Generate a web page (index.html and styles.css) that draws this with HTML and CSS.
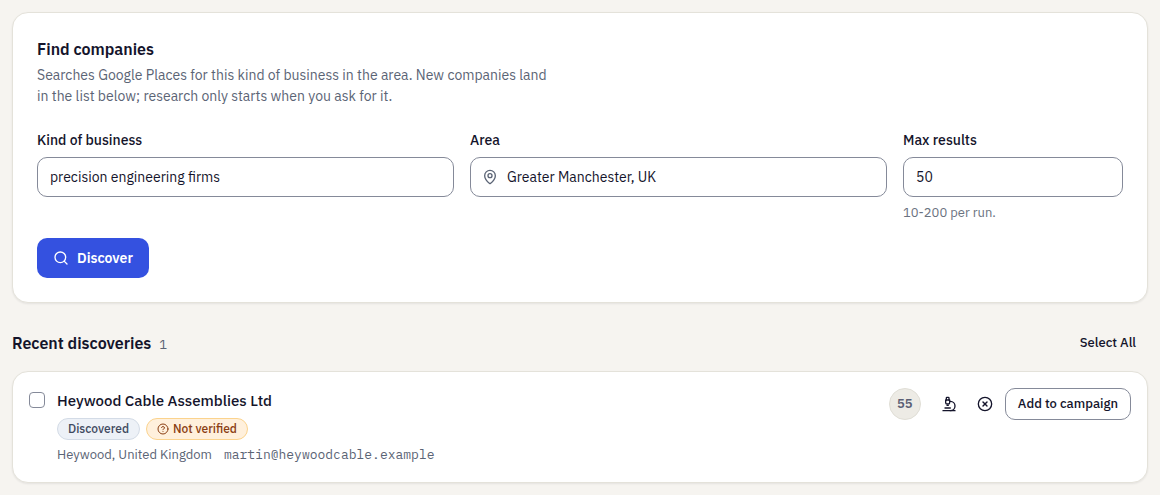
FILE: index.html
```html
<!DOCTYPE html>
<html lang="en">
<head>
    <meta charset="UTF-8">
    <meta name="viewport" content="width=device-width, initial-scale=1.0">
    <title>Find companies</title>
    <link rel="stylesheet" href="styles.css">
</head>
<body>

    <!-- Search form -->
    <form class="card search-card">
        <div class="card-head">
            <h2>Find companies</h2>
            <p>Searches Google Places for this kind of business in the area. New companies land in the list below; research only starts when you ask for it.</p>
        </div>
        <div class="fields">
            <div class="field">
                <label for="kind">Kind of business</label>
                <input class="input" type="text" id="kind" value="precision engineering firms">
            </div>
            <div class="field">
                <label for="area">Area</label>
                <div class="input input-icon">
                    <svg class="icon" viewBox="0 0 24 24"><path d="M20 10c0 4.993-5.539 10.193-7.399 11.799a1 1 0 0 1-1.202 0C9.539 20.193 4 14.993 4 10a8 8 0 0 1 16 0"/><circle cx="12" cy="10" r="3"/></svg>
                    <input type="text" id="area" value="Greater Manchester, UK">
                </div>
            </div>
            <div class="field">
                <label for="max">Max results</label>
                <input class="input" type="text" inputmode="numeric" id="max" value="50" aria-describedby="max-hint">
                <span class="hint" id="max-hint">10-200 per run.</span>
            </div>
        </div>
        <button class="btn btn-primary" type="button">
            <svg class="icon" viewBox="0 0 24 24"><circle cx="11" cy="11" r="8"/><path d="m21 21-4.300-4.300"/></svg>
            Discover
        </button>
    </form>

    <!-- Results -->
    <section class="results">
        <div class="results-head">
            <div class="results-title">
                <h2>Recent discoveries</h2>
                <span class="count">1</span>
            </div>
            <button class="btn btn-small" type="button">Select All</button>
        </div>
        <article class="card company">
            <input class="check" type="checkbox" id="company-1">
            <div class="company-info">
                <h3><label for="company-1">Heywood Cable Assemblies Ltd</label></h3>
                <div class="badges">
                    <span class="badge">Discovered</span>
                    <span class="badge badge-warn">
                        <svg class="icon" viewBox="0 0 24 24"><circle cx="12" cy="12" r="10"/><path d="M9.090 9a3 3 0 0 1 5.830 1c0 2-3 3-3 3"/><path d="M12 17h.01"/></svg>
                        Not verified
                    </span>
                </div>
                <div class="meta">
                    <span>Heywood, United Kingdom</span>
                    <span class="email">martin@heywoodcable.example</span>
                </div>
            </div>
            <span class="score">55</span>
            <div class="actions">
                <button class="icon-btn" type="button" aria-label="Research">
                    <svg class="icon" viewBox="0 0 24 24"><path d="M6 18h8"/><path d="M3 22h18"/><path d="M14 22a7 7 0 1 0 0-14h-1"/><path d="M9 14h2"/><path d="M9 12a2 2 0 0 1-2-2V6h6v4a2 2 0 0 1-2 2Z"/><path d="M12 6V3a1 1 0 0 0-1-1H9a1 1 0 0 0-1 1v3"/></svg>
                </button>
                <button class="icon-btn" type="button" aria-label="Dismiss">
                    <svg class="icon" viewBox="0 0 24 24"><circle cx="12" cy="12" r="10"/><path d="m15 9-6 6"/><path d="m9 9 6 6"/></svg>
                </button>
                <button class="btn btn-small btn-outline" type="button">Add to campaign</button>
            </div>
        </article>
    </section>

</body>
</html>
```
FILE: styles.css
```css
* {
    box-sizing: border-box;
}
body {
    margin: 0;
    padding: 12px;
    background: #f6f4f0;
    color: #14142b;
    font-family: "IBM Plex Sans", Roboto, sans-serif;
    font-size: 14px;
    line-height: 20px;
}
h2, h3, p {
    margin: 0;
}
h2 {
    font-size: 16px;
    line-height: 24px;
    font-weight: 600;
}
h3 {
    font-size: 15px;
    line-height: 26px;
    font-weight: 500;
}
input, button {
    font: inherit;
    color: inherit;
}
.icon {
    width: 16px;
    height: 16px;
    flex: none;
    fill: none;
    stroke: currentColor;
    stroke-width: 2;
    stroke-linecap: round;
    stroke-linejoin: round;
}
.card {
    background: #fff;
    border: 1px solid #e4e2da;
    border-radius: 16px;
    box-shadow: 0 1px 2px rgba(20, 20, 43, 0.08);
}

/* search form */
.search-card {
    padding: 24px;
}
.card-head {
    margin-bottom: 23px;
}
.card-head p {
    max-width: 520px;
    margin-top: 4px;
    line-height: 21px;
    color: #5b6475;
}
.fields {
    display: grid;
    grid-template-columns: 1fr 1fr 220px;
    gap: 16px;
    margin-bottom: 16px;
}
.field {
    display: flex;
    flex-direction: column;
    gap: 7px;
}
.field label {
    font-weight: 500;
}
.input {
    width: 100%;
    height: 40px;
    padding: 0 12px;
    border: 1px solid #858a99;
    border-radius: 10px;
    background: #fff;
}
.input-icon {
    display: flex;
    align-items: center;
    gap: 9px;
    padding-left: 11px;
}
.input-icon .icon {
    color: #5b6475;
}
.input-icon input {
    flex: 1;
    min-width: 0;
    padding: 0;
    border: 0;
    outline: 0;
    background: none;
}
.hint {
    font-size: 13px;
    line-height: 18px;
    color: #6b7280;
}

/* buttons */
.btn {
    display: inline-flex;
    align-items: center;
    gap: 8px;
    height: 40px;
    padding: 0 16px;
    border: 0;
    border-radius: 10px;
    background: none;
    white-space: nowrap;
}
.btn-primary {
    background: #3451e0;
    color: #fff;
    font-weight: 600;
}
.btn-small {
    height: 32px;
    padding: 0 12px;
    font-size: 13px;
    font-weight: 500;
}
.btn-outline {
    border: 1px solid #858a99;
    background: #fff;
}
.icon-btn {
    display: flex;
    align-items: center;
    justify-content: center;
    width: 32px;
    height: 32px;
    padding: 0;
    border: 0;
    background: none;
}

/* results */
.results {
    margin-top: 24px;
}
.results-head {
    display: flex;
    align-items: center;
    justify-content: space-between;
    margin-bottom: 12px;
}
.results-title {
    display: flex;
    align-items: baseline;
    gap: 8px;
}
.count {
    font-family: "IBM Plex Mono", "Liberation Mono", monospace;
    font-size: 13px;
    color: #5b6475;
}
.company {
    display: flex;
    align-items: flex-start;
    gap: 12px;
    padding: 16px;
}
.check {
    appearance: none;
    width: 16px;
    height: 16px;
    margin: 4px 0 0;
    border: 1px solid #858a99;
    border-radius: 4px;
    background: #fff;
}
.check:checked {
    background: #3451e0;
}
.company-info {
    display: flex;
    flex-direction: column;
    gap: 4px;
    flex: 1;
    min-width: 0;
}
.badges {
    display: flex;
    gap: 6px;
}
.badge {
    display: flex;
    align-items: center;
    gap: 4px;
    height: 22px;
    padding: 0 10px;
    border: 1px solid #d3dbe6;
    border-radius: 11px;
    background: #edf1f7;
    color: #3f4a5f;
    font-size: 12px;
    font-weight: 500;
}
.badge .icon {
    width: 12px;
    height: 12px;
}
.badge-warn {
    border-color: #fbd38d;
    background: #fff0dc;
    color: #8a3d12;
}
.meta {
    display: flex;
    gap: 12px;
    font-size: 13px;
    line-height: 22px;
    color: #5b6475;
}
.email {
    font-family: "IBM Plex Mono", "Liberation Mono", monospace;
}
.score {
    display: flex;
    align-items: center;
    justify-content: center;
    width: 32px;
    height: 32px;
    border: 1px solid #e0ded6;
    border-radius: 50%;
    background: #edebe5;
    color: #5b5f74;
    font-size: 13px;
    font-weight: 600;
}
.actions {
    display: flex;
    gap: 4px;
}
```
